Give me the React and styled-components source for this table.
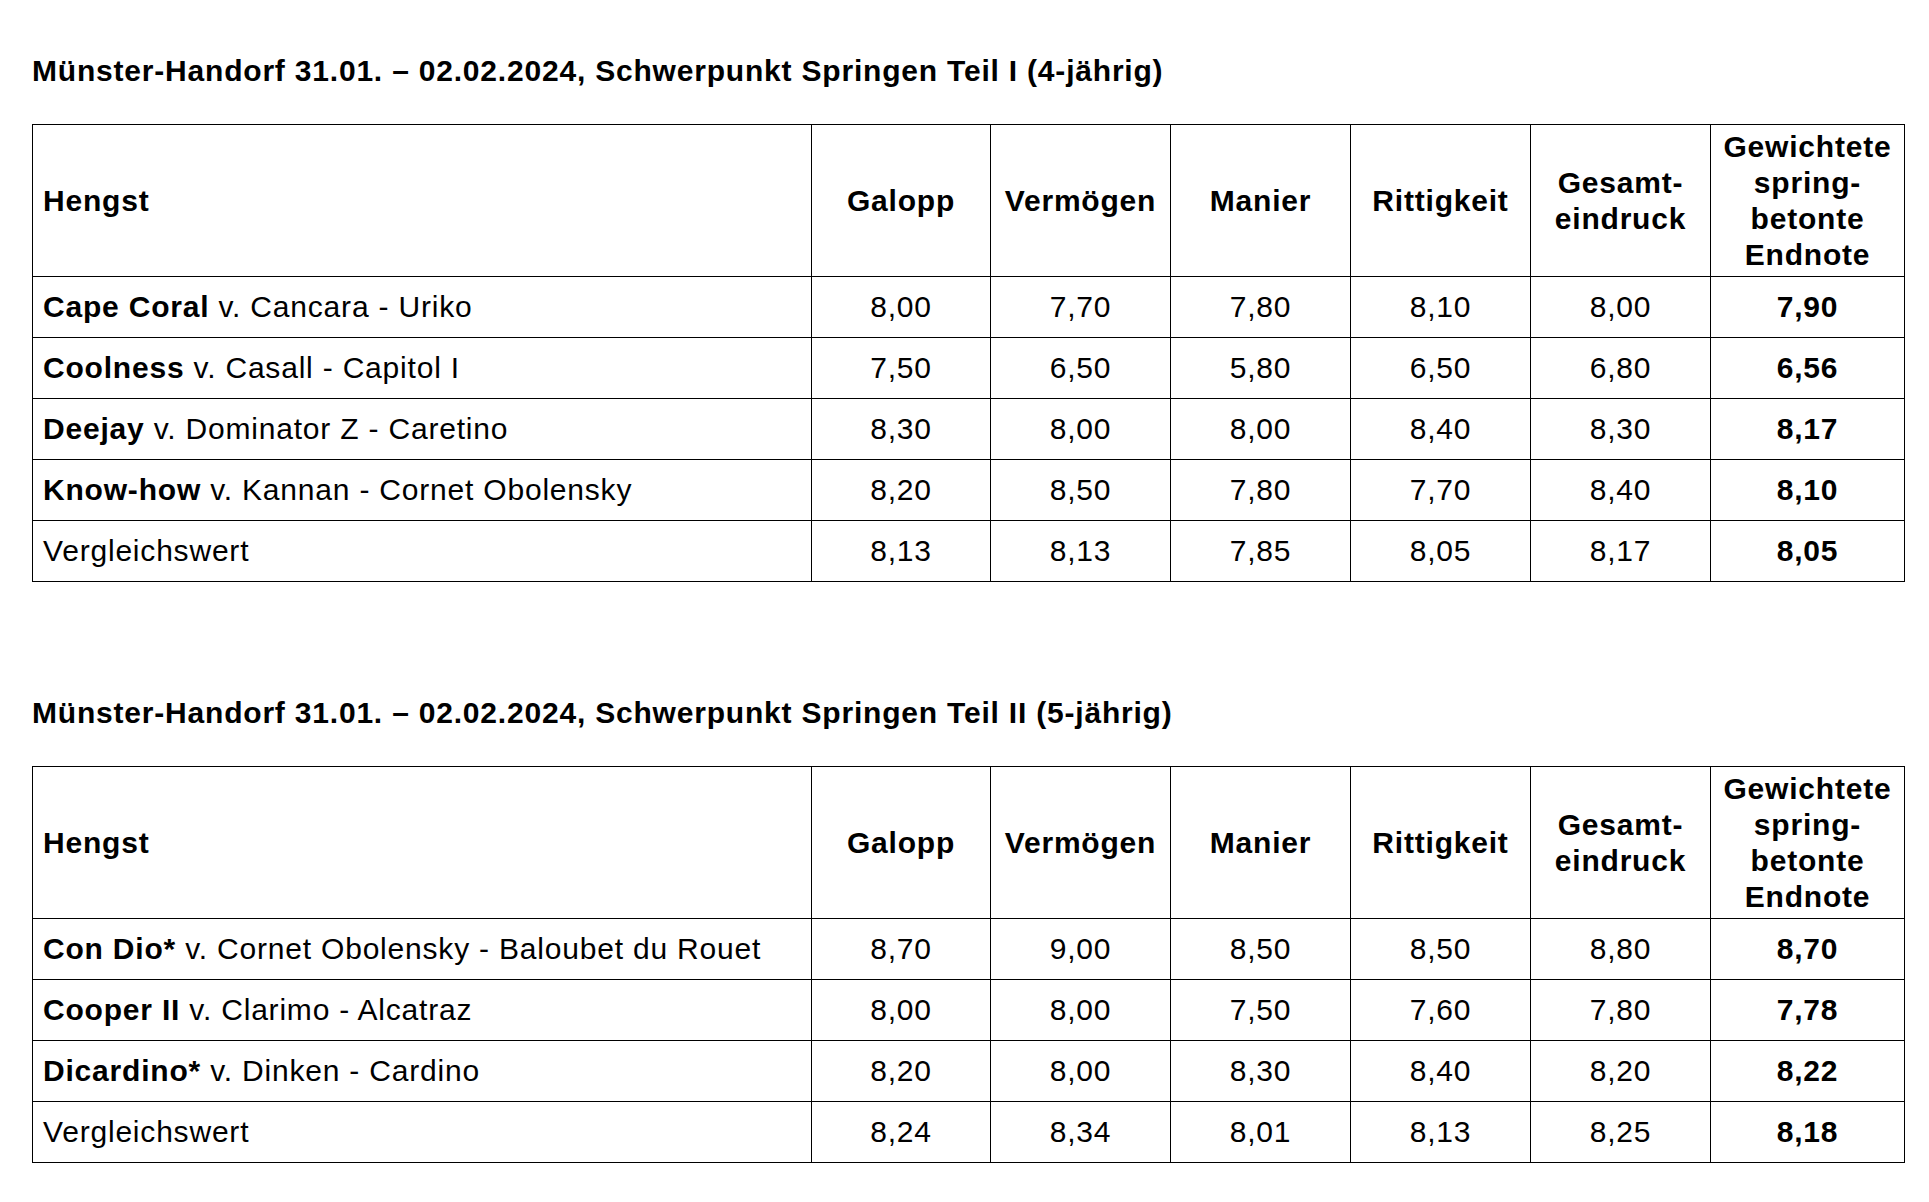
import React from 'react'
import styled, { createGlobalStyle } from 'styled-components'

const GlobalStyle = createGlobalStyle`
  html, body {
    margin: 0;
    padding: 0;
    background: #ffffff;
  }
  body {
    font-family: "Liberation Sans", Arial, sans-serif;
    color: #000000;
    letter-spacing: 0.8px;
  }
`

const Page = styled.div`
  padding: 54px 0 40px 32px;
`

const Section = styled.section`
  & + & {
    margin-top: 114px;
  }
`

const Title = styled.h2`
  margin: 0 0 36px 0;
  font-size: 30px;
  line-height: 34px;
  font-weight: bold;
`

const Table = styled.table`
  width: 1872px;
  table-layout: fixed;
  border-collapse: collapse;
  font-size: 30px;
  line-height: 36px;
`

const HeadCell = styled.th`
  height: 151px;
  padding: 0 ${p => (p.$left ? '10px' : '2px')};
  border: 1px solid #000;
  text-align: ${p => (p.$left ? 'left' : 'center')};
  vertical-align: middle;
  font-weight: bold;
`

const Cell = styled.td`
  height: 60px;
  padding: 0 ${p => (p.$left ? '10px' : '2px')};
  border: 1px solid #000;
  text-align: ${p => (p.$left ? 'left' : 'center')};
  vertical-align: middle;
  font-weight: ${p => (p.$bold ? 'bold' : 'normal')};
  white-space: nowrap;
`

const Name = styled.b`
  font-weight: bold;
`

const widths = [779, 179, 180, 180, 180, 180, 194]

const sections = [
  {
    title: 'Münster-Handorf 31.01. – 02.02.2024, Schwerpunkt Springen Teil I (4-jährig)',
    rows: [
      { name: 'Cape Coral', pedigree: ' v. Cancara - Uriko', values: ['8,00', '7,70', '7,80', '8,10', '8,00', '7,90'] },
      { name: 'Coolness', pedigree: ' v. Casall - Capitol I', values: ['7,50', '6,50', '5,80', '6,50', '6,80', '6,56'] },
      { name: 'Deejay', pedigree: ' v. Dominator Z - Caretino', values: ['8,30', '8,00', '8,00', '8,40', '8,30', '8,17'] },
      { name: 'Know-how', pedigree: ' v. Kannan - Cornet Obolensky', values: ['8,20', '8,50', '7,80', '7,70', '8,40', '8,10'] },
      { name: null, pedigree: 'Vergleichswert', values: ['8,13', '8,13', '7,85', '8,05', '8,17', '8,05'] },
    ],
  },
  {
    title: 'Münster-Handorf 31.01. – 02.02.2024, Schwerpunkt Springen Teil II (5-jährig)',
    rows: [
      { name: 'Con Dio*', pedigree: ' v. Cornet Obolensky - Baloubet du Rouet', values: ['8,70', '9,00', '8,50', '8,50', '8,80', '8,70'] },
      { name: 'Cooper II', pedigree: ' v. Clarimo - Alcatraz', values: ['8,00', '8,00', '7,50', '7,60', '7,80', '7,78'] },
      { name: 'Dicardino*', pedigree: ' v. Dinken - Cardino', values: ['8,20', '8,00', '8,30', '8,40', '8,20', '8,22'] },
      { name: null, pedigree: 'Vergleichswert', values: ['8,24', '8,34', '8,01', '8,13', '8,25', '8,18'] },
    ],
  },
]

function ResultTable({ rows }) {
  return (
    <Table>
      <colgroup>
        {widths.map((w, i) => (
          <col key={i} style={{ width: w }} />
        ))}
      </colgroup>
      <thead>
        <tr>
          <HeadCell $left>Hengst</HeadCell>
          <HeadCell>Galopp</HeadCell>
          <HeadCell>Vermögen</HeadCell>
          <HeadCell>Manier</HeadCell>
          <HeadCell>Rittigkeit</HeadCell>
          <HeadCell>Gesamt-<br />eindruck</HeadCell>
          <HeadCell>Gewichtete<br />spring-<br />betonte<br />Endnote</HeadCell>
        </tr>
      </thead>
      <tbody>
        {rows.map((row, i) => (
          <tr key={i}>
            <Cell $left>
              {row.name && <Name>{row.name}</Name>}
              {row.pedigree}
            </Cell>
            {row.values.map((v, j) => (
              <Cell key={j} $bold={j === row.values.length - 1}>{v}</Cell>
            ))}
          </tr>
        ))}
      </tbody>
    </Table>
  )
}

export default function App() {
  return (
    <>
      <GlobalStyle />
      <Page>
        {sections.map((s, i) => (
          <Section key={i}>
            <Title>{s.title}</Title>
            <ResultTable rows={s.rows} />
          </Section>
        ))}
      </Page>
    </>
  )
}
